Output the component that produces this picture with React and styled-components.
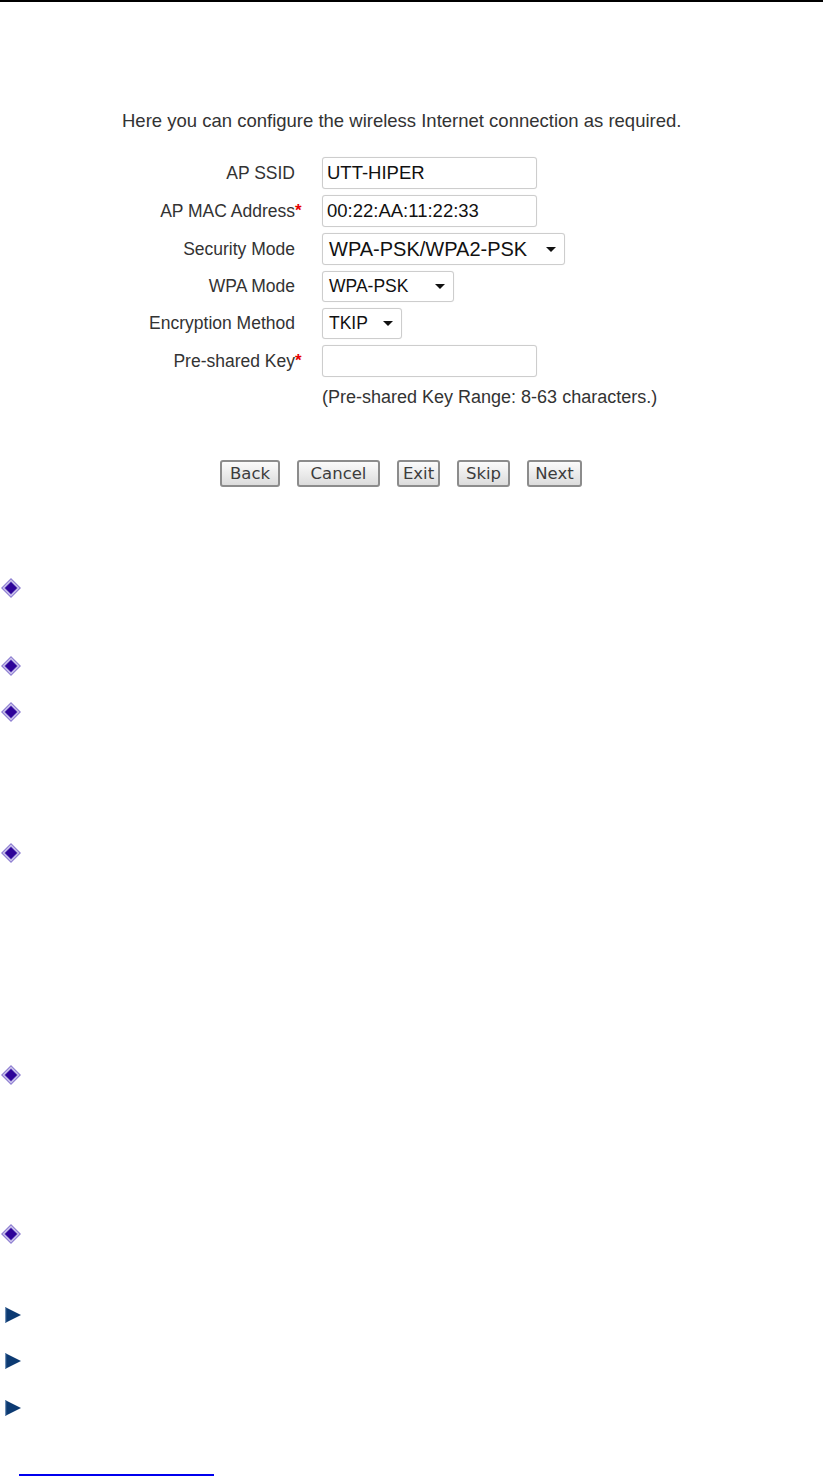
import React from 'react'
import styled, {createGlobalStyle} from 'styled-components'

const GlobalStyle = createGlobalStyle`
  html, body {
    margin: 0;
    padding: 0;
    background: #fff;
  }
  body {
    font-family: "Liberation Sans", Arial, sans-serif;
  }
`

const Page = styled.div`
  width: 831px;
  min-height: 1476px;
  display: flex;
  flex-direction: column;
`

const TopRule = styled.div`
  width: 823px;
  height: 2px;
  background: #000;
`

const Figure = styled.section`
  padding: 108px 0 0 122px;
  display: flex;
  flex-direction: column;
`

const Intro = styled.p`
  margin: 0;
  font-size: 18.5px;
  line-height: 21px;
  color: #333;
`

const FormGrid = styled.div`
  margin-top: 26px;
  display: grid;
  grid-template-columns: 173px 27px auto;
  row-gap: 6px;
  align-items: center;
`

const Label = styled.div`
  text-align: right;
  font-size: 17.5px;
  color: #333;
`

const Star = styled.span`
  color: #e60000;
  font-weight: bold;
  font-size: 17px;
`

const Field = styled.div`
  justify-self: start;
`

const TextInput = styled.input`
  box-sizing: border-box;
  width: ${p => p.$w}px;
  height: 32px;
  border: 1px solid #cdcdcd;
  border-radius: 3px;
  box-shadow: 0 0 1px rgba(0, 0, 0, 0.12);
  padding: 0 0 0 4px;
  font-family: "Liberation Sans", Arial, sans-serif;
  font-size: 18.5px;
  color: #111;
  background: #fff;
  outline: none;
`

const SelectBox = styled.div`
  box-sizing: border-box;
  width: ${p => p.$w}px;
  height: ${p => p.$h}px;
  border: 1px solid #cdcdcd;
  border-radius: 3px;
  box-shadow: 0 0 1px rgba(0, 0, 0, 0.12);
  padding: 0 8px 0 6px;
  display: flex;
  align-items: center;
  justify-content: space-between;
  font-size: ${p => p.$fs}px;
  color: #111;
  background: #fff;
`

const Caret = styled.span`
  width: 0;
  height: 0;
  border-left: 5px solid transparent;
  border-right: 5px solid transparent;
  border-top: 5px solid #111;
`

const Hint = styled.div`
  grid-column: 3;
  margin-top: 4px;
  font-size: 18px;
  color: #333;
`

const ButtonRow = styled.div`
  margin-top: 52px;
  padding-left: 98px;
  display: flex;
  gap: 17px;
`

const Button = styled.button`
  box-sizing: border-box;
  width: ${p => p.$w}px;
  height: 27px;
  padding: 0;
  border: 2px solid #8c8c8c;
  border-radius: 3px;
  background: linear-gradient(#fbfbfb, #dcdcdc);
  font-family: "DejaVu Sans", Verdana, sans-serif;
  font-size: 16.5px;
  color: #3c3c3c;
`

const List = styled.div`
  margin-top: 91px;
  display: flex;
  flex-direction: column;
`

const Item = styled.div`
  margin-top: ${p => p.$gap}px;
  padding-left: ${p => p.$indent}px;
  display: flex;
  align-items: center;
`

const FootRule = styled.div`
  margin: 58px 0 0 19px;
  width: 195px;
  height: 2px;
  background: #0000ee;
`

const Diamond = () => (
  <svg width="20" height="20" viewBox="0 0 20 20">
    <polygon points="10,0 20,10 10,20 0,10" fill="#8f80d2" />
    <polygon points="10,1.8 18.2,10 10,18.2 1.8,10" fill="#ddd5f3" />
    <polygon points="10,3.2 16.8,10 10,16.8 3.2,10" fill="#6f5bc4" />
    <polygon points="10,4.2 15.8,10 10,15.8 4.2,10" fill="#2e0399" />
  </svg>
)

const Arrow = () => (
  <svg width="16" height="16" viewBox="0 0 16 16">
    <polygon points="0,0 16,8 0,16" fill="#0c3a72" />
    <rect x="0" y="0" width="1.2" height="16" fill="#6f8fb5" />
  </svg>
)

const fields = [
  {label: 'AP SSID', kind: 'input', value: 'UTT-HIPER', w: 215},
  {label: 'AP MAC Address', req: true, kind: 'input', value: '00:22:AA:11:22:33', w: 215},
  {label: 'Security Mode', kind: 'select', value: 'WPA-PSK/WPA2-PSK', w: 243, h: 32, fs: 20},
  {label: 'WPA Mode', kind: 'select', value: 'WPA-PSK', w: 132, h: 31, fs: 17.5},
  {label: 'Encryption Method', kind: 'select', value: 'TKIP', w: 80, h: 31, fs: 17.5},
  {label: 'Pre-shared Key', req: true, kind: 'input', value: '', w: 215},
]

const buttons = [
  {text: 'Back', w: 60},
  {text: 'Cancel', w: 83},
  {text: 'Exit', w: 43},
  {text: 'Skip', w: 53},
  {text: 'Next', w: 55},
]

const bullets = [
  {icon: 'diamond', gap: 0},
  {icon: 'diamond', gap: 58},
  {icon: 'diamond', gap: 26},
  {icon: 'diamond', gap: 121},
  {icon: 'diamond', gap: 202},
  {icon: 'diamond', gap: 139},
  {icon: 'arrow', gap: 63},
  {icon: 'arrow', gap: 30},
  {icon: 'arrow', gap: 31},
]

export default function App() {
  return (
    <Page>
      <GlobalStyle />
      <TopRule />
      <Figure>
        <Intro>Here you can configure the wireless Internet connection as required.</Intro>
        <FormGrid>
          {fields.map(f => (
            <React.Fragment key={f.label}>
              <Label>{f.label}</Label>
              <div>{f.req && <Star>*</Star>}</div>
              <Field>
                {f.kind === 'input' ? (
                  <TextInput $w={f.w} value={f.value} readOnly />
                ) : (
                  <SelectBox $w={f.w} $h={f.h} $fs={f.fs}>
                    <span>{f.value}</span>
                    <Caret />
                  </SelectBox>
                )}
              </Field>
            </React.Fragment>
          ))}
          <Hint>(Pre-shared Key Range: 8-63 characters.)</Hint>
        </FormGrid>
        <ButtonRow>
          {buttons.map(b => (
            <Button key={b.text} $w={b.w}>{b.text}</Button>
          ))}
        </ButtonRow>
      </Figure>
      <List>
        {bullets.map((b, i) => (
          <Item key={i} $gap={b.gap} $indent={b.icon === 'diamond' ? 1 : 5}>
            {b.icon === 'diamond' ? <Diamond /> : <Arrow />}
          </Item>
        ))}
      </List>
      <FootRule />
    </Page>
  )
}
